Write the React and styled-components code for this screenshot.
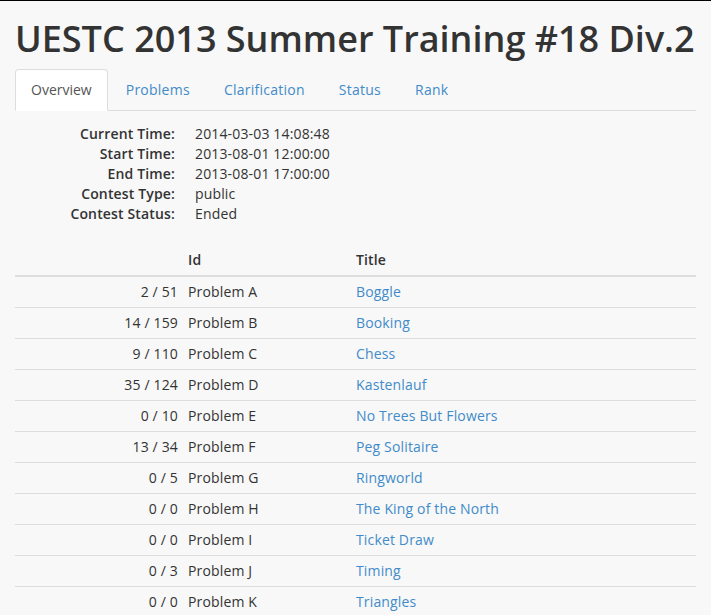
import React from "react";
import styled, { createGlobalStyle } from "styled-components";

const Global = createGlobalStyle`
  html, body { margin: 0; padding: 0; background: #f8f8f8; }
  body {
    font-family: "Open Sans", "Liberation Sans", sans-serif;
    font-size: 14px;
    line-height: 20px;
    letter-spacing: 0.15px;
    color: #333;
  }
`;

const TopRule = styled.div`
  height: 1px;
  background: #000;
`;

const Container = styled.div`
  padding: 0 15px;
`;

const Title = styled.h1`
  margin: 18px 0 10px;
  font-size: 36px;
  font-weight: 600;
  line-height: 40px;
  color: #333;
  letter-spacing: 0;
`;

const Tabs = styled.ul`
  display: flex;
  list-style: none;
  margin: 0;
  padding: 0;
  border-bottom: 1px solid #ddd;
`;

const Tab = styled.li`
  margin-right: 2px;
  margin-bottom: -1px;
`;

const TabLink = styled.a`
  display: block;
  padding: 10px 15px;
  line-height: 20px;
  letter-spacing: ${(p) => (p.$active ? "0" : "0.25px")};
  border: 1px solid ${(p) => (p.$active ? "#ddd" : "transparent")};
  border-bottom-color: transparent;
  border-radius: 4px 4px 0 0;
  background: ${(p) => (p.$active ? "#fff" : "transparent")};
  color: ${(p) => (p.$active ? "#555" : "#428bca")};
  text-decoration: none;
`;

const Info = styled.dl`
  display: grid;
  grid-template-columns: 160px 1fr;
  column-gap: 20px;
  margin: 13px 0 21px;
`;

const Label = styled.dt`
  text-align: right;
  font-weight: 600;
`;

const Value = styled.dd`
  margin: 0;
`;

const Table = styled.table`
  width: 100%;
  border-collapse: collapse;
  border-spacing: 0;
`;

const Th = styled.th`
  padding: 5px;
  text-align: ${(p) => (p.$right ? "right" : "left")};
  font-weight: 600;
  border-bottom: 2px solid #ddd;
  line-height: 20px;
`;

const Td = styled.td`
  padding: 5px;
  line-height: 20px;
  border-top: 1px solid #ddd;
  text-align: ${(p) => (p.$right ? "right" : "left")};
`;

const Link = styled.a`
  color: #428bca;
  text-decoration: none;
`;

const tabs = ["Overview", "Problems", "Clarification", "Status", "Rank"];

const info = [
  ["Current Time:", "2014-03-03 14:08:48"],
  ["Start Time:", "2013-08-01 12:00:00"],
  ["End Time:", "2013-08-01 17:00:00"],
  ["Contest Type:", "public"],
  ["Contest Status:", "Ended"],
];

const problems = [
  ["2 / 51", "A", "Boggle"],
  ["14 / 159", "B", "Booking"],
  ["9 / 110", "C", "Chess"],
  ["35 / 124", "D", "Kastenlauf"],
  ["0 / 10", "E", "No Trees But Flowers"],
  ["13 / 34", "F", "Peg Solitaire"],
  ["0 / 5", "G", "Ringworld"],
  ["0 / 0", "H", "The King of the North"],
  ["0 / 0", "I", "Ticket Draw"],
  ["0 / 3", "J", "Timing"],
  ["0 / 0", "K", "Triangles"],
];

export default function App() {
  return (
    <>
      <Global />
      <TopRule />
      <Container>
        <Title>UESTC 2013 Summer Training #18 Div.2</Title>
        <Tabs>
          {tabs.map((t, i) => (
            <Tab key={t}>
              <TabLink href="#" $active={i === 0}>
                {t}
              </TabLink>
            </Tab>
          ))}
        </Tabs>
        <Info>
          {info.map(([k, v]) => (
            <React.Fragment key={k}>
              <Label>{k}</Label>
              <Value>{v}</Value>
            </React.Fragment>
          ))}
        </Info>
        <Table>
          <colgroup>
            <col style={{ width: 168 }} />
            <col style={{ width: 168 }} />
            <col />
          </colgroup>
          <thead>
            <tr>
              <Th $right></Th>
              <Th>Id</Th>
              <Th>Title</Th>
            </tr>
          </thead>
          <tbody>
            {problems.map(([s, id, title]) => (
              <tr key={id}>
                <Td $right>{s}</Td>
                <Td>Problem {id}</Td>
                <Td>
                  <Link href="#">{title}</Link>
                </Td>
              </tr>
            ))}
          </tbody>
        </Table>
      </Container>
    </>
  );
}
